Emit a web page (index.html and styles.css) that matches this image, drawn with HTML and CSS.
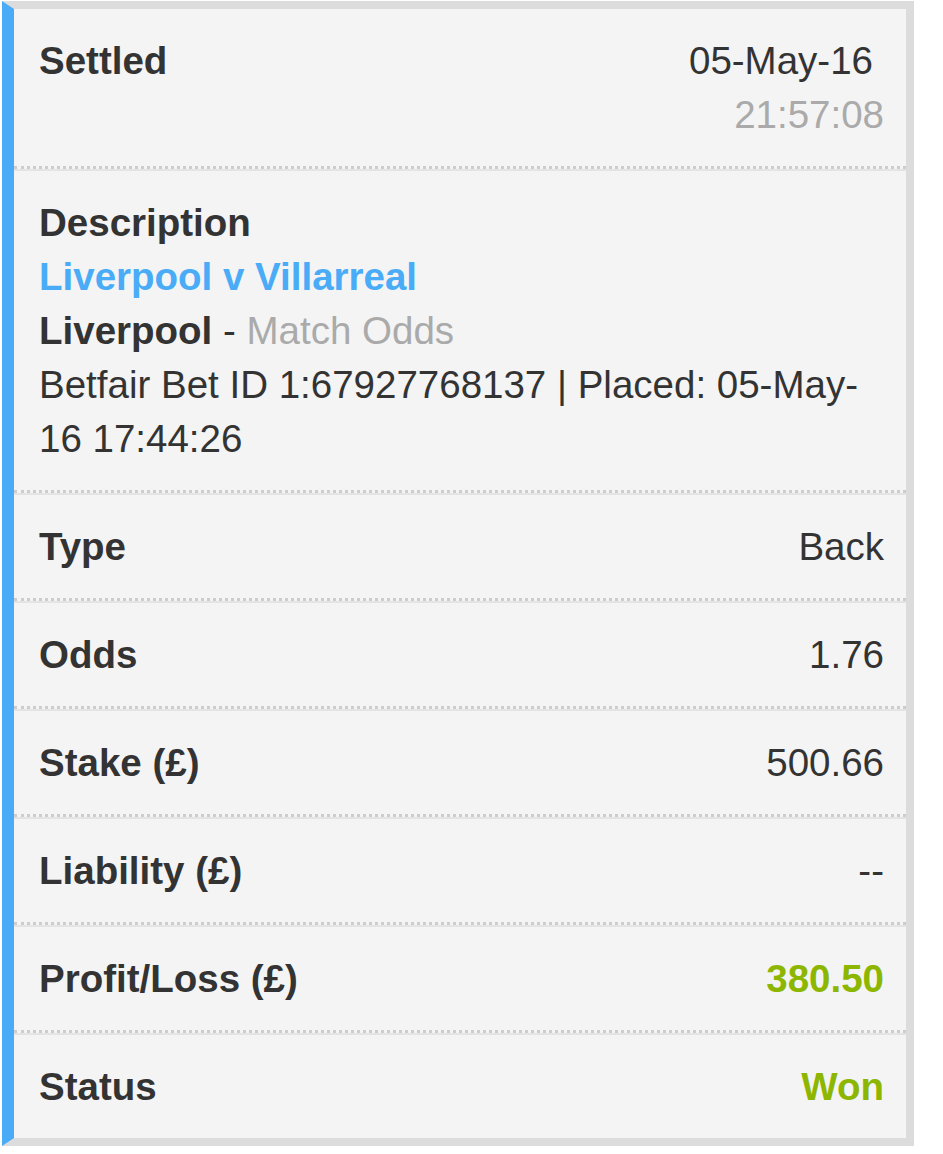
FILE: index.html
```html
<!DOCTYPE html>
<html lang="en">
<head>
  <meta charset="UTF-8">
  <meta name="viewport" content="width=device-width, initial-scale=1.0">
  <title>Bet details</title>
  <link rel="stylesheet" href="styles.css">
</head>
<body>
  <div class="bet-card">
    <div class="row">
      <span class="label">Settled</span>
      <span class="value">
        <span class="date">05-May-16</span>
        <span class="time">21:57:08</span>
      </span>
    </div>

    <div class="row desc">
      <div class="label">Description</div>
      <a class="event" href="#">Liverpool v Villarreal</a>
      <div><b>Liverpool</b> - <span class="market">Match Odds</span></div>
      <div>Betfair Bet ID 1:67927768137 | Placed: 05-May-16 17:44:26</div>
    </div>

    <div class="row">
      <span class="label">Type</span>
      <span class="value">Back</span>
    </div>
    <div class="row">
      <span class="label">Odds</span>
      <span class="value">1.76</span>
    </div>
    <div class="row">
      <span class="label">Stake (£)</span>
      <span class="value">500.66</span>
    </div>
    <div class="row">
      <span class="label">Liability (£)</span>
      <span class="value">--</span>
    </div>
    <div class="row">
      <span class="label">Profit/Loss (£)</span>
      <span class="value win">380.50</span>
    </div>
    <div class="row">
      <span class="label">Status</span>
      <span class="value win">Won</span>
    </div>
  </div>
</body>
</html>
```

FILE: styles.css
```css
body {
  margin: 0;
  background: #fff;
  color: #333;
  font-family: "Liberation Sans", Arial, sans-serif;
  font-size: 38.5px;
  line-height: 54px;
}
.bet-card {
  width: 892px;
  margin: 1px 0 0 2px;
  background: #f4f4f4;
  border-left: 12px solid #4aacf6;
  border-top: 8px solid #dcdcdc;
  border-right: 8px solid #dcdcdc;
  border-bottom: 8px solid #dcdcdc;
}
.row {
  display: flex;
  justify-content: space-between;
  align-items: flex-start;
  padding: 24.5px 22px 24.5px 25px;
  border-bottom: 3px dotted #cdcdcd;
}
.row + .row {
  border-top: 2px solid #e4e4e4;
}
.row:last-child {
  border-bottom: none;
}
.desc {
  display: block;
}
.label {
  font-weight: bold;
}
.value {
  text-align: right;
}
.date {
  display: block;
  margin-right: 11px;
}
.time {
  display: block;
  color: #aaa;
}
.event {
  display: block;
  color: #4aacf6;
  font-weight: bold;
  text-decoration: none;
}
.market {
  color: #aaa;
}
.win {
  color: #8db600;
  font-weight: bold;
}
```
